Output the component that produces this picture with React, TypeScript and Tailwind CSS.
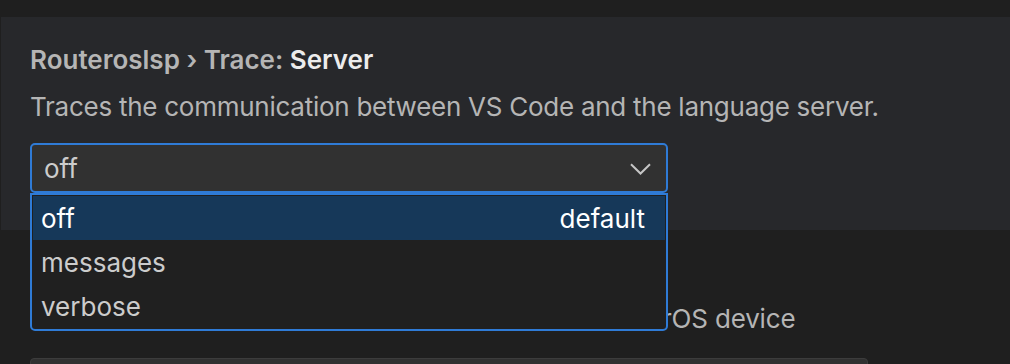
const options = ["off", "messages", "verbose"];

export default function App() {
  return (
    <div
      className="w-[1010px] h-[364px] overflow-hidden bg-[#1f1f1f] text-[26px]"
      style={{ fontFamily: "Inter, 'Noto Sans', sans-serif" }}
    >
      <div className="h-[17px] bg-[#1f1f1f]" />

      <div className="ml-[1px] h-[213px] bg-[#27282b] pl-[29px] pt-[25px]">
        <div className="leading-[36px] font-semibold text-[#b5b5b5]">
          Routeroslsp › Trace: <span className="text-[#ececec]">Server</span>
        </div>
        <div className="mt-[11px] leading-[36px] tracking-[-0.26px] text-[#b5b5b5]">
          Traces the communication between VS Code and the language server.
        </div>

        <div className="relative mt-[18px] w-[638px]">
          <div className="flex h-[50px] items-center justify-between rounded-[5px] border-2 border-[#2f7bd6] bg-[#313131] pl-[12px] pr-[15px] text-[#cccccc]">
            <span>off</span>
            <svg width="21" height="12" viewBox="0 0 21 12" fill="none" className="mt-[1px]">
              <path d="M1 1.2 L10.5 10.5 L20 1.2" stroke="#c6c6c6" strokeWidth="2" />
            </svg>
          </div>

          <ul className="absolute left-0 right-0 top-[50px] z-10 rounded-b-[5px] border-2 border-[#2f7bd6] bg-[#202020] p-px">
            {options.map((o, i) => (
              <li
                key={o}
                className={
                  i === 0
                    ? "flex h-[44px] items-center justify-between bg-[#163859] pl-[8px] pr-[20px] text-white"
                    : "flex h-[44px] items-center justify-between pl-[8px] pr-[20px] text-[#cccccc]"
                }
              >
                <span>{o}</span>
                {i === 0 && <span>default</span>}
              </li>
            ))}
          </ul>
        </div>
      </div>

      <div className="pl-[30px] pt-[25px]">
        <div className="leading-[36px] font-semibold text-[#b5b5b5]">
          Routeroslsp: <span className="text-[#ececec]">Base Url</span>
        </div>
        <div className="mt-[10px] leading-[36px] tracking-[-0.17px] text-[#b5b5b5]">
          The host or IP address of the REST API on the RouterOS device
        </div>
        <div className="mt-[21px] h-[40px] w-[838px] rounded-[4px] border border-[#3c3c3c] bg-[#313131]" />
      </div>
    </div>
  );
}
